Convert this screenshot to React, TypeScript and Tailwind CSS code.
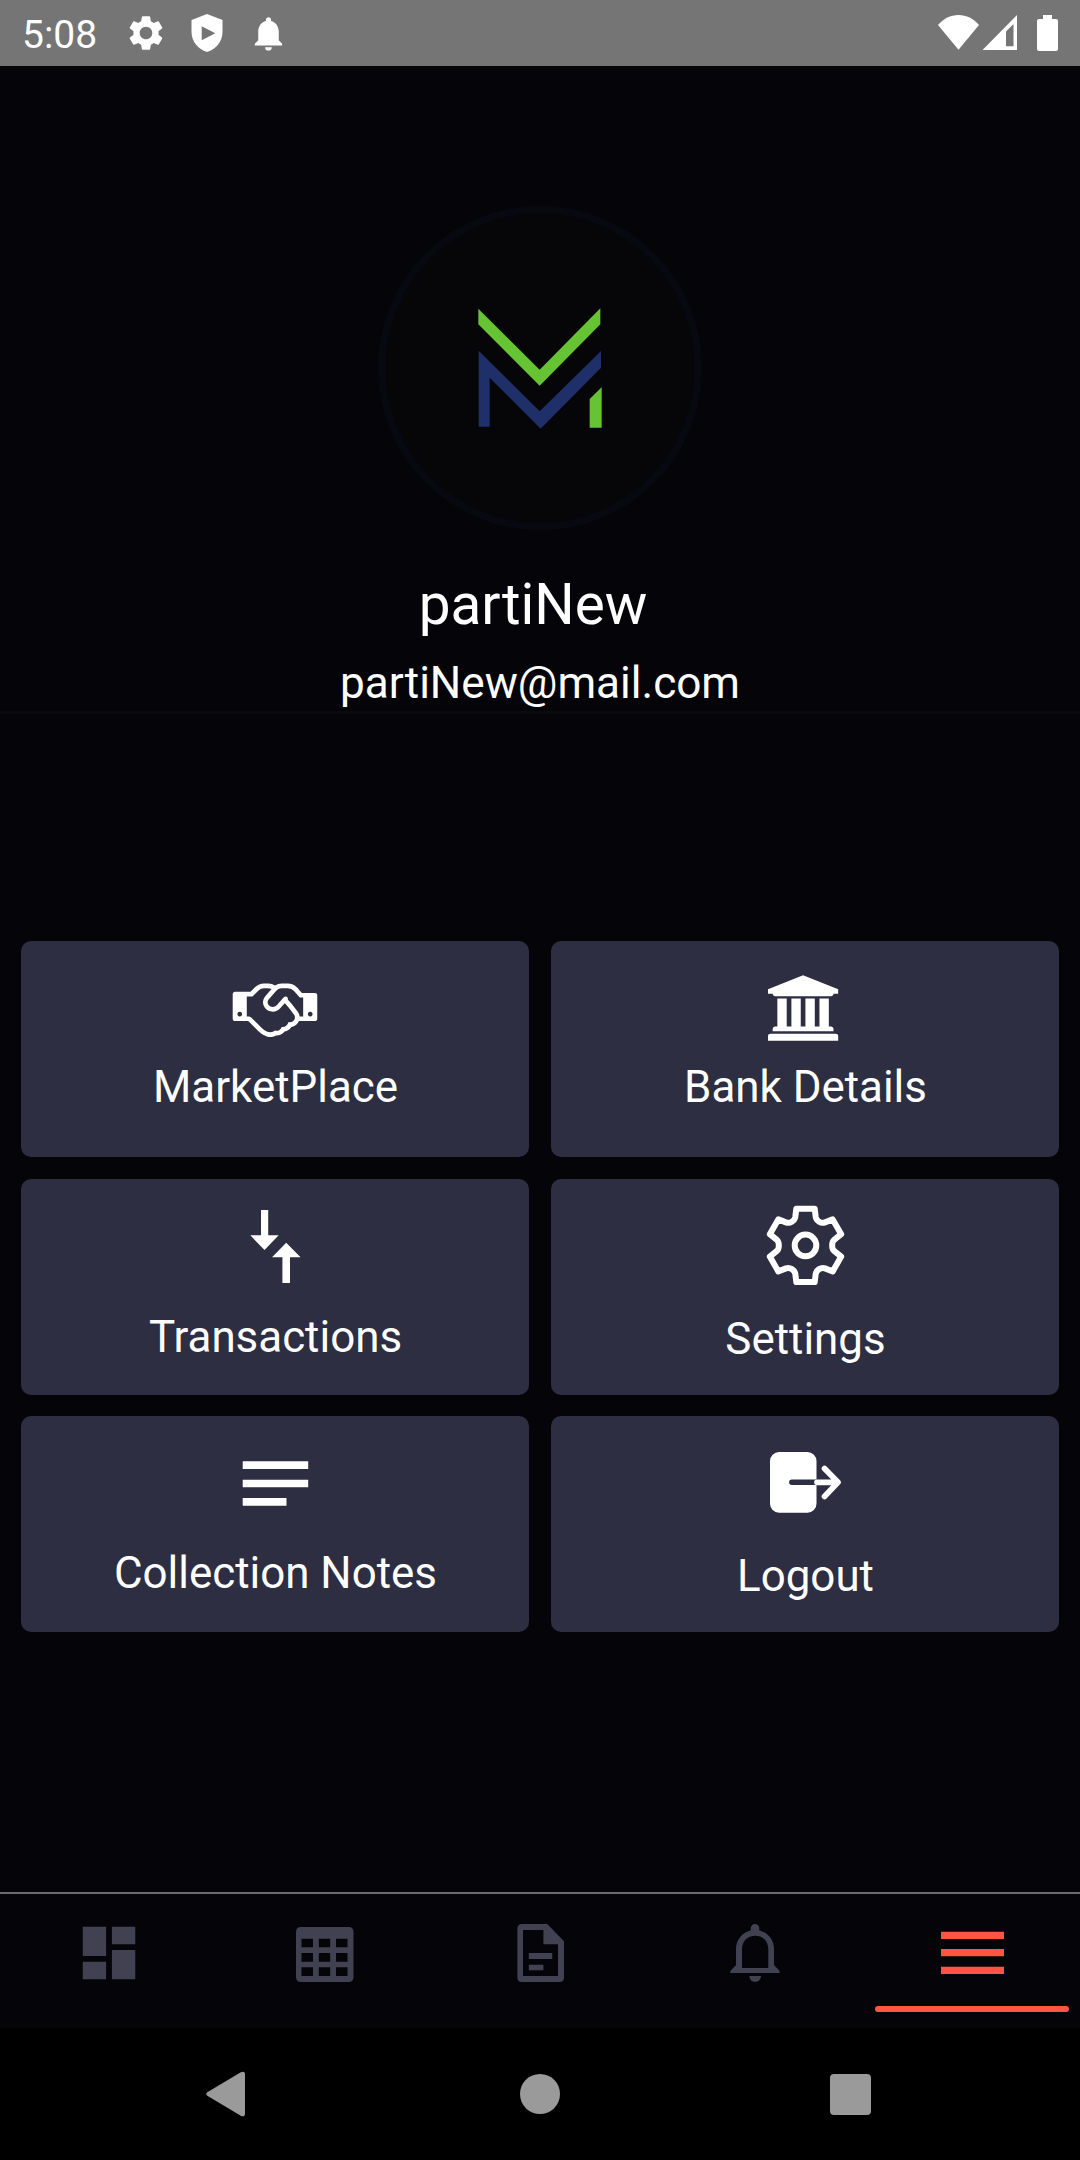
import type { ReactNode } from "react";
import { MdDashboard, MdNotifications, MdSettings } from "react-icons/md";

function StatusBar() {
  return (
    <header className="flex h-[66px] shrink-0 items-center bg-[#757575] text-white">
      <span className="mt-[3px] ml-[22px] w-[101px] text-[39px] leading-[46px]">5:08</span>
      <MdSettings className="ml-[2px] size-[42px]" />
      <svg className="ml-[24px] h-[38px] w-[32px]" viewBox="0 0 32 38" fill="currentColor">
        <path
          fillRule="evenodd"
          d="M16 0 31.500 6V18C31.500 27.500 25 35.300 16 38 7 35.300.5 27.500.5 18V6ZM10.700 12.300V26.300L24.300 19.300Z"
        />
      </svg>
      <MdNotifications className="mt-[1px] ml-[25px] size-[41px]" />
      <svg className="mr-[21px] ml-auto h-[38px] w-[122px]" viewBox="937 14 122 38" fill="currentColor">
        <path d="M958.500 49.700 938 25C943.500 18.500 950.500 15 958.500 15S973.500 18.500 979 25Z" />
        <path fillRule="evenodd" d="M982.500 50 1017 15V50ZM1006 31.500V46.300H1013.500V24Z" />
        <path d="M1043 15H1052V19H1056Q1058 19 1058 21V49Q1058 51 1056 51H1039Q1037 51 1037 49V21Q1037 19 1039 19H1043Z" />
      </svg>
    </header>
  );
}

function Logo() {
  return (
    <div className="flex size-[324px] shrink-0 items-center justify-center rounded-full border-7 border-[#080811] bg-[#060609]">
      <svg className="h-[121px] w-[124px]" viewBox="325 340 372 363">
        <path fill="#66c434" d="M326 342 510 525 692 341V389L510 573 326 389Z" />
        <path fill="#1e2f6a" d="M327 468 510 650 694 469V519L513 702 360 549V696H327Z" />
        <path fill="#66c434" d="M660 613 696 578V699H660Z" />
      </svg>
    </div>
  );
}

function Card({ label, gap, children }: { label: string; gap: string; children: ReactNode }) {
  return (
    <button className="flex h-[216px] flex-col items-center rounded-[10px] bg-[#2d2e41] text-white">
      <svg className="h-[110px] w-[100px] shrink-0" viewBox="-50 0 100 110" fill="currentColor">
        {children}
      </svg>
      <span className={`${gap} pl-[1px] text-[43.900px] leading-[52px] whitespace-nowrap`}>{label}</span>
    </button>
  );
}

function Tab({ active = false, children }: { active?: boolean; children: ReactNode }) {
  return (
    <div className={`flex flex-col items-center justify-between ${active ? "text-[#ff5542]" : "text-[#414151]"}`}>
      <div className="mt-[24px] flex h-[70px] items-center justify-center">{children}</div>
      {active && <div className="mb-[16px] h-[6px] w-[194px] rounded-full bg-[#ff5542]" />}
    </div>
  );
}

export default function App() {
  return (
    <div className="flex h-[2160px] w-[1080px] flex-col overflow-hidden bg-[#050509] font-[Roboto,sans-serif]">
      <StatusBar />

      <section className="flex h-[648px] shrink-0 flex-col items-center border-b-3 border-[#09090f] pt-[140px] text-white">
        <Logo />
        <h1 className="mt-[39px] mr-[14px] text-[56.700px] leading-[72px]">partiNew</h1>
        <p className="mt-[12px] text-[44.100px] leading-[60px]">partiNew@mail.com</p>
      </section>

      <main className="mt-[227px] grid grid-cols-2 gap-x-[22px] gap-y-[21.500px] px-[21px]">
        <Card label="MarketPlace" gap="mt-[10px]">
          <g transform="translate(-42.300 89.500) scale(.0367 -.0367)">
            <path d="M192 384q40 0 56 32t0 64t-56 32t-56 -32t0 -64t56 -32zM1665 442q-10 13 -38.5 50t-41.5 54t-38 49t-42.5 53t-40.5 47t-45 49l-125 -140q-83 -94 -208.5 -92t-205.5 98q-57 69 -56.5 158t58.5 157l177 206q-22 11 -51 16.5t-47.5 6t-56.5 -0.5t-49 -1q-92 0 -158 -66l-158 -158h-155v-544q5 0 21 0.5t22 0t19.5 -2t20.5 -4.5t17.5 -8.5t18.5 -13.5l297 -292q115 -111 227 -111q78 0 125 47q57 -20 112.5 8t72.5 85q74 -6 127 44q20 18 36 45.5t14 50.5q10 -10 43 -10q43 0 77 21t49.5 53t12 71.5t-30.5 73.5zM1824 384h96v512h-93l-157 180q-66 76 -169 76h-167q-89 0 -146 -67l-209 -243q-28 -33 -28 -75t27 -75q43 -51 110 -52t111 49l193 218q25 23 53.5 21.5t47 -27t8.5 -56.5q16 -19 56 -63t60 -68q29 -36 82.5 -105.5t64.5 -84.5q52 -66 60 -140zM2112 384q40 0 56 32t0 64t-56 32t-56 -32t0 -64t56 -32zM2304 960v-640q0 -26 -19 -45t-45 -19h-434q-27 -65 -82 -106.5t-125 -51.5q-33 -48 -80.5 -81.5t-102.5 -45.5q-42 -53 -104.5 -81.5t-128.5 -24.5q-60 -34 -126 -39.5t-127.5 14t-117 53.5t-103.5 81l-287 282h-358q-26 0 -45 19t-19 45v672q0 26 19 45t45 19h421q14 14 47 48t47.5 48t44 40t50.5 37.5t51 25.5t62 19.5t68 5.5h117q99 0 181 -56q82 56 181 56h167q35 0 67 -6t56.5 -14.5t51.5 -26.5t44.5 -31t43 -39.5t39 -42t41 -48t41.5 -48.5h355q26 0 45 -19t19 -45z" />
          </g>
        </Card>
        <Card label="Bank Details" gap="mt-[10px]">
          <path
            transform="translate(-37 90.300) scale(.03655 -.03655)"
            d="M960 1536l960 -384v-128h-128q0 -26 -20.5 -45t-48.5 -19h-1526q-28 0 -48.5 19t-20.5 45h-128v128zM256 896h256v-768h128v768h256v-768h128v768h256v-768h128v768h256v-768h59q28 0 48.5 -19t20.5 -45v-64h-1664v64q0 26 20.5 45t48.5 19h59v768zM1851 -64q28 0 48.5 -19t20.5 -45v-128h-1920v128q0 26 20.5 45t48.5 19h1782z"
          />
        </Card>
        <Card label="Transactions" gap="mt-[22px]">
          <path d="M-14 31H-6.800V56.300H3.700L-10.500 71-24.700 56.300H-14Z" />
          <path d="M11.200 63.700 25.600 78.300H15V104H7.400V78.300H-3Z" />
        </Card>
        <Card label="Settings" gap="mt-[24px]">
          <g transform="translate(.5 66.400)" fill="none" stroke="currentColor" strokeWidth="6" strokeLinejoin="round">
            <circle r="10.800" />
            <path d="M-9.200-36.700H9.200L10.200-28.500C10.800-24.500 15.500-21.500 19.500-23L27.200-26 35.700-11.200 28.600-5.500C26-3 26 3 28.600 5.500L35.700 11.200 27.200 26 19.500 23C15.500 21.500 10.800 24.500 10.200 28.500L9.200 36.700H-9.200L-10.200 28.500C-10.800 24.500-15.500 21.500-19.500 23L-27.200 26-35.700 11.200-28.600 5.500C-26 3-26-3-28.600-5.500L-35.700-11.200-27.200-26-19.500-23C-15.500-21.500-10.800-24.500-10.200-28.500Z" />
          </g>
        </Card>
        <Card label="Collection Notes" gap="mt-[21px]">
          <path d="M-32.300 45.300H33.200V53H-32.300ZM-32.300 63.700H33.200V71.200H-32.300ZM-32.300 82H11.500V89.700H-32.300Z" />
        </Card>
        <Card label="Logout" gap="mt-[24px]">
          <path d="M-26 36H2.500A9 9 0 0 1 11.500 45V63.600H-13.200A2.700 2.700 0 0 0-13.200 69H11.500V87.700A9 9 0 0 1 2.500 96.700H-26A9 9 0 0 1-35 87.700V45A9 9 0 0 1-26 36Z" />
          <path
            d="M12 66.300H32M19.500 52.500 33 66.300 19.500 80.500"
            fill="none"
            stroke="currentColor"
            strokeWidth="5.700"
            strokeLinejoin="round"
            strokeLinecap="round"
          />
        </Card>
      </main>

      <nav className="mt-auto grid h-[136px] shrink-0 grid-cols-5 border-t-2 border-[#6b6b6e]">
        <Tab>
          <MdDashboard className="ml-[1px] size-[70px]" />
        </Tab>
        <Tab>
          <svg className="h-[70px] w-[70px]" viewBox="289 1918 70 70" fill="currentColor">
            <path
              fillRule="evenodd"
              d="M301 1927H348.500Q353.500 1927 353.500 1932V1977Q353.500 1982 348.500 1982H301Q296 1982 296 1977V1932Q296 1927 301 1927ZM301.500 1938.700V1947.300H313V1938.700ZM318.800 1938.700V1947.300H330.200V1938.700ZM336 1938.700V1947.300H347.500V1938.700ZM301.500 1953V1961.700H313V1953ZM318.800 1953V1961.700H330.200V1953ZM336 1953V1961.700H347.500V1953ZM301.500 1967.300V1976H313V1967.300ZM318.800 1967.300V1976H330.200V1967.300ZM336 1967.300V1976H347.500V1967.300Z"
            />
          </svg>
        </Tab>
        <Tab>
          <svg className="h-[70px] w-[70px]" viewBox="505 1918 70 70" fill="currentColor">
            <path
              fillRule="evenodd"
              d="M522 1924H547.200L564 1941.300V1977.500Q564 1982 559.500 1982H522Q517.400 1982 517.400 1977.500V1928.500Q517.400 1924 522 1924ZM523 1930V1976H558V1944.300H543.400V1930Z"
            />
            <path d="M528.800 1953H552.200V1959H528.800ZM528.800 1964.700H543.400V1970.300H528.800Z" />
          </svg>
        </Tab>
        <Tab>
          <svg className="h-[70px] w-[70px]" viewBox="721 1918 70 70" fill="currentColor">
            <path
              fillRule="evenodd"
              d="M750.700 1930.500V1928.300A4.300 4.300 0 0 1 759.300 1928.300V1930.500C768 1932.500 774 1940 774 1949V1965L779.700 1971V1973H730.300V1971L736 1965V1949C736 1940 742 1932.500 750.700 1930.500ZM742 1949V1968H768.300V1949C768.300 1941.500 763 1935.700 755.200 1935.700S742 1941.500 742 1949Z"
            />
            <path d="M749.300 1976H761A5.850 6 0 0 1 749.300 1976Z" />
          </svg>
        </Tab>
        <Tab active>
          <svg className="h-[70px] w-[70px]" viewBox="937 1918 70 70" fill="currentColor">
            <path d="M941 1931.700H1004V1939H941ZM941 1949H1004V1956.300H941ZM941 1966.700H1004V1974H941Z" />
          </svg>
        </Tab>
      </nav>

      <footer className="flex h-[132px] shrink-0 items-center bg-black pl-[206px] text-[#9a9a9a]">
        <svg className="h-[46px] w-[40px]" viewBox="0 0 40 46" fill="currentColor">
          <path d="M1.300 21.300 34.800 1.200Q39 -.5 39 3.500V42.500Q39 46.500 34.800 44.800L1.300 24.700Q-.8 23 1.300 21.300Z" />
        </svg>
        <div className="ml-[274px] size-[40px] rounded-full bg-current" />
        <div className="ml-[270px] size-[41px] rounded-[4px] bg-current" />
      </footer>
    </div>
  );
}
